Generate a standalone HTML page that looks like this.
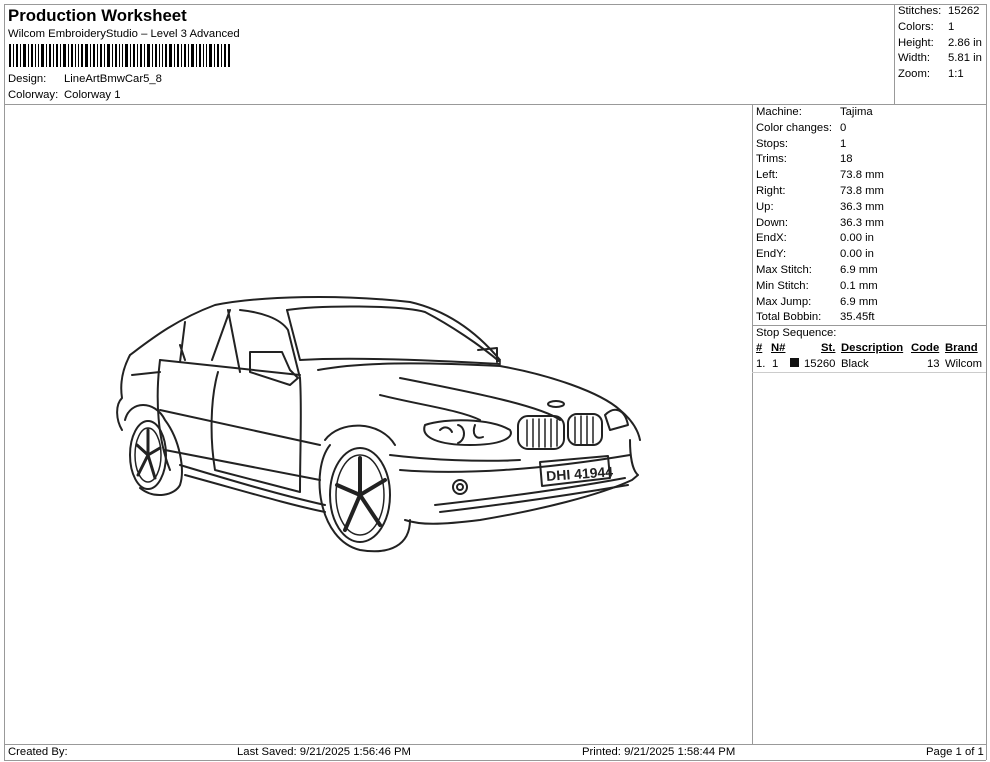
<!DOCTYPE html>
<html><head><meta charset="utf-8"><style>
body{margin:0;width:990px;height:762px;background:#fff;position:relative;overflow:hidden;font-family:"Liberation Sans",Arial,sans-serif;color:#000}
.a{position:absolute;white-space:nowrap;font-size:11.3px;line-height:13px}
.l{position:absolute;background:#999}
</style></head><body>
<div class="l" style="left:4px;top:4px;width:982px;height:1px"></div>
<div class="l" style="left:4px;top:4px;width:1px;height:756px"></div>
<div class="l" style="left:986px;top:4px;width:1px;height:756px"></div>
<div class="l" style="left:4px;top:104px;width:982px;height:1px"></div>
<div class="l" style="left:894px;top:4px;width:1px;height:100px"></div>
<div class="l" style="left:752px;top:104px;width:1px;height:640px"></div>
<div class="l" style="left:752px;top:325px;width:234px;height:1px"></div>
<div class="l" style="left:752px;top:372px;width:234px;height:1px;background:#ccc"></div>
<div class="l" style="left:4px;top:744px;width:982px;height:1px"></div>
<div class="l" style="left:4px;top:760px;width:982px;height:1px"></div>

<div class="a" style="left:8px;top:7px;font-size:16.8px;line-height:18px;font-weight:bold">Production Worksheet</div>
<div class="a" style="left:8px;top:28px">Wilcom EmbroideryStudio – Level 3 Advanced</div>
<svg style="position:absolute;left:9px;top:44px" width="222" height="23">
<g fill="#000">
<rect x="0" y="0" width="2" height="23"/><rect x="4" y="0" width="1" height="23"/><rect x="7" y="0" width="2" height="23"/><rect x="11" y="0" width="1" height="23"/><rect x="14" y="0" width="3" height="23"/><rect x="19" y="0" width="1" height="23"/><rect x="22" y="0" width="2" height="23"/><rect x="26" y="0" width="1" height="23"/><rect x="29" y="0" width="1" height="23"/><rect x="32" y="0" width="3" height="23"/><rect x="37" y="0" width="1" height="23"/><rect x="40" y="0" width="2" height="23"/><rect x="44" y="0" width="1" height="23"/><rect x="47" y="0" width="2" height="23"/><rect x="51" y="0" width="1" height="23"/><rect x="54" y="0" width="3" height="23"/><rect x="59" y="0" width="1" height="23"/><rect x="62" y="0" width="2" height="23"/><rect x="66" y="0" width="1" height="23"/><rect x="69" y="0" width="1" height="23"/><rect x="72" y="0" width="2" height="23"/><rect x="76" y="0" width="3" height="23"/><rect x="81" y="0" width="1" height="23"/><rect x="84" y="0" width="2" height="23"/><rect x="88" y="0" width="1" height="23"/><rect x="91" y="0" width="2" height="23"/><rect x="95" y="0" width="1" height="23"/><rect x="98" y="0" width="3" height="23"/><rect x="103" y="0" width="1" height="23"/><rect x="106" y="0" width="2" height="23"/><rect x="110" y="0" width="1" height="23"/><rect x="113" y="0" width="1" height="23"/><rect x="116" y="0" width="3" height="23"/><rect x="121" y="0" width="1" height="23"/><rect x="124" y="0" width="2" height="23"/><rect x="128" y="0" width="1" height="23"/><rect x="131" y="0" width="2" height="23"/><rect x="135" y="0" width="1" height="23"/><rect x="138" y="0" width="3" height="23"/><rect x="143" y="0" width="1" height="23"/><rect x="146" y="0" width="2" height="23"/><rect x="150" y="0" width="1" height="23"/><rect x="153" y="0" width="1" height="23"/><rect x="156" y="0" width="2" height="23"/><rect x="160" y="0" width="3" height="23"/><rect x="165" y="0" width="1" height="23"/><rect x="168" y="0" width="2" height="23"/><rect x="172" y="0" width="1" height="23"/><rect x="175" y="0" width="2" height="23"/><rect x="179" y="0" width="1" height="23"/><rect x="182" y="0" width="3" height="23"/><rect x="187" y="0" width="1" height="23"/><rect x="190" y="0" width="2" height="23"/><rect x="194" y="0" width="1" height="23"/><rect x="197" y="0" width="1" height="23"/><rect x="200" y="0" width="3" height="23"/><rect x="205" y="0" width="1" height="23"/><rect x="208" y="0" width="2" height="23"/><rect x="212" y="0" width="1" height="23"/><rect x="215" y="0" width="2" height="23"/><rect x="219" y="0" width="2" height="23"/>
</g></svg>
<div class="a" style="left:8px;top:73px">Design:</div><div class="a" style="left:64px;top:73px">LineArtBmwCar5_8</div>
<div class="a" style="left:8px;top:89px">Colorway:</div><div class="a" style="left:64px;top:89px">Colorway 1</div>

<div class="a" style="left:898px;top:5px">Stitches:</div><div class="a" style="left:948px;top:5px">15262</div>
<div class="a" style="left:898px;top:21px">Colors:</div><div class="a" style="left:948px;top:21px">1</div>
<div class="a" style="left:898px;top:37px">Height:</div><div class="a" style="left:948px;top:37px">2.86 in</div>
<div class="a" style="left:898px;top:52px">Width:</div><div class="a" style="left:948px;top:52px">5.81 in</div>
<div class="a" style="left:898px;top:68px">Zoom:</div><div class="a" style="left:948px;top:68px">1:1</div>

<div class="a" style="left:756px;top:105px;line-height:15.8px">Machine:<br>Color changes:<br>Stops:<br>Trims:<br>Left:<br>Right:<br>Up:<br>Down:<br>EndX:<br>EndY:<br>Max Stitch:<br>Min Stitch:<br>Max Jump:<br>Total Bobbin:<br>Stop Sequence:</div>
<div class="a" style="left:840px;top:105px;line-height:15.8px">Tajima<br>0<br>1<br>18<br>73.8 mm<br>73.8 mm<br>36.3 mm<br>36.3 mm<br>0.00 in<br>0.00 in<br>6.9 mm<br>0.1 mm<br>6.9 mm<br>35.45ft</div>
<div class="a" style="left:756px;top:342px;font-weight:bold;text-decoration:underline">#</div>
<div class="a" style="left:771px;top:342px;font-weight:bold;text-decoration:underline">N#</div>
<div class="a" style="left:821px;top:342px;font-weight:bold;text-decoration:underline">St.</div>
<div class="a" style="left:841px;top:342px;font-weight:bold;text-decoration:underline">Description</div>
<div class="a" style="left:911px;top:342px;font-weight:bold;text-decoration:underline">Code</div>
<div class="a" style="left:945px;top:342px;font-weight:bold;text-decoration:underline">Brand</div>
<div class="a" style="left:756px;top:358px">1.</div><div class="a" style="left:772px;top:358px">1</div>
<div style="position:absolute;left:790px;top:358px;width:9px;height:9px;background:#111"></div>
<div class="a" style="left:804px;top:358px">15260</div><div class="a" style="left:841px;top:358px">Black</div>
<div class="a" style="left:927px;top:358px">13</div><div class="a" style="left:945px;top:358px">Wilcom</div>

<div class="a" style="left:8px;top:746px">Created By:</div>
<div class="a" style="left:237px;top:746px">Last Saved: 9/21/2025 1:56:46 PM</div>
<div class="a" style="left:582px;top:746px">Printed: 9/21/2025 1:58:44 PM</div>
<div class="a" style="left:926px;top:746px">Page 1 of 1</div>

<svg style="position:absolute;left:0;top:0" width="990" height="762" fill="none" stroke="#222" stroke-width="2" stroke-linecap="round" stroke-linejoin="round">
<path d="M130,355 C150,340 175,320 215,305 C260,296 340,294 410,302 C445,310 475,330 500,360"/>
<path d="M130,355 C122,370 120,385 122,398 C115,405 116,420 122,430"/>
<path d="M287,310 C320,305 400,305 425,312 C450,325 480,345 500,362"/>
<path d="M287,310 L300,360 C350,357 430,360 500,364"/>
<path d="M318,370 C360,362 420,362 500,366 C550,375 600,392 620,410 C632,420 638,430 640,440"/>
<path d="M180,345 L185,360 M185,322 L180,362 M212,360 L230,310 M228,310 L240,372 M240,310 C260,312 280,318 288,330 L300,378"/>
<path d="M160,360 L300,375 M132,375 L160,372"/>
<path d="M160,360 C155,400 158,440 170,470"/>
<path d="M218,372 C210,400 210,440 215,470 L300,492 C300,450 302,410 300,378"/>
<path d="M160,410 L320,445 M165,450 L320,480"/>
<path d="M180,465 C230,480 280,495 325,505 M185,475 C240,490 290,505 325,512"/>
<path d="M250,352 L282,352 L290,370 L298,378 L290,385 L250,372 Z"/>
<path d="M478,350 L497,348 L497,362"/>
<path d="M400,378 C460,390 540,405 560,420 M380,395 C420,405 460,410 480,420"/>
<path d="M630,440 C630,455 632,470 638,475 L632,480 C600,495 540,510 480,520 C440,525 420,525 405,520"/>
<path d="M390,455 C430,460 480,462 520,460 M400,470 C460,475 540,470 630,455"/>
<path d="M435,505 C480,500 560,490 625,478 M440,512 C500,505 570,495 628,485"/>
<path d="M425,425 C445,418 490,418 510,430 C515,438 500,445 470,445 C440,445 420,438 425,425 Z"/>
<path d="M440,430 c5,-5 10,-2 12,2 M458,425 c8,2 8,15 0,18 M475,425 c-3,8 0,15 8,12"/>
<path d="M605,415 C615,405 625,410 628,425 L610,430 Z"/>
<rect x="518" y="416" width="46" height="33" rx="10"/>
<rect x="568" y="414" width="34" height="31" rx="9"/>
<path d="M527,420 v26 M533,419 v28 M539,419 v28 M545,419 v28 M551,419 v28 M557,420 v26 M575,417 v26 M581,416 v28 M587,416 v28 M593,417 v26" stroke-width="1.5"/>
<ellipse cx="556" cy="404" rx="8" ry="3"/>
<path d="M540,462 L608,456 L610,478 L542,486 Z"/>
<text x="546" y="479" font-family="Liberation Sans,sans-serif" font-size="14" font-weight="bold" fill="#222" stroke="none" transform="rotate(-4 575 472)">DHI 41944</text>
<circle cx="460" cy="487" r="7"/><circle cx="460" cy="487" r="3"/>
<path d="M330,445 C310,470 318,540 360,550 C390,555 410,545 410,520"/>
<path d="M325,440 C340,420 380,420 395,445"/>
<ellipse cx="360" cy="495" rx="30" ry="47"/>
<ellipse cx="360" cy="495" rx="24" ry="40" stroke-width="1.5"/>
<path d="M360,495 L360,458 M360,495 L385,480 M360,495 L380,525 M360,495 L345,530 M360,495 L337,485" stroke-width="4"/>
<path d="M125,420 C130,400 155,400 165,420 C180,440 185,470 180,485 C175,495 155,500 140,488"/>
<ellipse cx="148" cy="455" rx="18" ry="34"/>
<ellipse cx="148" cy="455" rx="13" ry="27" stroke-width="1.5"/>
<path d="M148,455 L148,430 M148,455 L160,448 M148,455 L155,478 M148,455 L138,475 M148,455 L137,445" stroke-width="3"/>
</svg>
</body></html>
